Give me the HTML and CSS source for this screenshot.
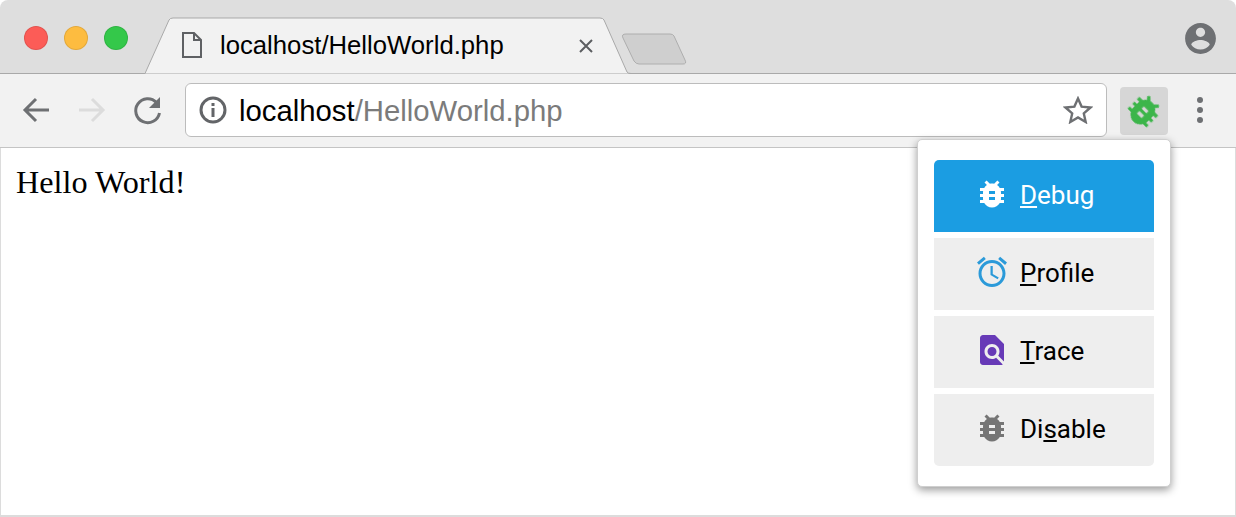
FILE: index.html
```html
<!DOCTYPE html>
<html lang="en">
<head>
<meta charset="utf-8">
<title>localhost/HelloWorld.php</title>
<link rel="stylesheet" href="styles.css">
</head>
<body>
<div class="window">
  <header class="titlebar">
    <div class="lights">
      <span class="light red"></span>
      <span class="light yellow"></span>
      <span class="light green"></span>
    </div>
    <div class="tab">
      <svg class="tab-shape" width="487" height="58" viewBox="0 0 487 58">
        <path d="M0 56.5 L24 3 Q25 1 28 1 H455 Q458 1 459 3 L482 55 Q483 56.5 486 56.5 H487" fill="#f2f2f2" stroke="#a9a9a9" stroke-width="1"/>
      </svg>
      <svg class="doc-icon" width="22" height="28" viewBox="0 0 22 28">
        <path d="M2 2 H13 L20 9 V26 H2 Z M13 2 V9 H20" fill="none" stroke="#5f6164" stroke-width="2"/>
      </svg>
      <span class="tab-title">localhost/HelloWorld.php</span>
      <svg class="tab-close" width="16" height="16" viewBox="0 0 16 16">
        <path d="M2 2 L14 14 M14 2 L2 14" stroke="#5c5e61" stroke-width="2"/>
      </svg>
    </div>
    <svg class="newtab" width="66" height="32" viewBox="0 0 66 32">
      <path d="M5 1 H49 Q52 1 53 3 L64 27 Q66 31 62 31 H18 Q15 31 13 28 L2 5 Q0 1 5 1 Z" fill="#cfcfcf" stroke="#aeaeae" stroke-width="1"/>
    </svg>
    <svg class="avatar" width="37" height="37" viewBox="0 0 24 24">
      <path fill="#6e7073" d="M12 2C6.48 2 2 6.48 2 12s4.48 10 10 10 10-4.48 10-10S17.52 2 12 2zm0 3c1.66 0 3 1.34 3 3s-1.34 3-3 3-3-1.34-3-3 1.34-3 3-3zm0 14.2c-2.5 0-4.71-1.28-6-3.22.03-1.99 4-3.08 6-3.08 1.99 0 5.97 1.09 6 3.08-1.29 1.94-3.5 3.22-6 3.22z"/>
    </svg>
  </header>

  <nav class="toolbar">
    <svg class="nav-icon" width="32" height="32" viewBox="0 0 32 32">
      <path d="M29 16 H6 M16 5 L5 16 L16 27" fill="none" stroke="#6e7073" stroke-width="3"/>
    </svg>
    <svg class="nav-icon" width="32" height="32" viewBox="0 0 32 32">
      <path d="M3 16 H26 M16 5 L27 16 L16 27" fill="none" stroke="#dcdcdc" stroke-width="3"/>
    </svg>
    <svg class="nav-icon" width="32" height="32" viewBox="0 0 32 32">
      <path d="M24.5 8.5 A12 12 0 1 0 27.5 19" fill="none" stroke="#6e7073" stroke-width="3"/>
      <path d="M28 3 V14 H17 Z" fill="#6e7073"/>
    </svg>
    <div class="omnibox">
      <svg class="info-icon" width="28" height="28" viewBox="0 0 28 28">
        <circle cx="14" cy="14" r="12" fill="none" stroke="#636568" stroke-width="3"/>
        <rect x="12.5" y="12" width="3" height="9" fill="#636568"/>
        <rect x="12.5" y="7" width="3" height="3" fill="#636568"/>
      </svg>
      <span class="url"><span class="url-host">localhost</span>/HelloWorld.php</span>
      <svg class="star" width="30" height="28" viewBox="0 0 30 28">
        <path d="M15 2.5 L18.6 10.6 L27.5 11.5 L20.8 17.4 L22.7 26 L15 21.5 L7.3 26 L9.2 17.4 L2.5 11.5 L11.4 10.6 Z" fill="none" stroke="#6e7073" stroke-width="2.4"/>
      </svg>
    </div>
    <div class="ext-button">
      <svg class="ext-bug" width="40" height="40" viewBox="0 0 24 24">
        <path fill="#3cb54a" d="M20 8h-2.81c-.45-.78-1.07-1.45-1.82-1.96L17 4.41 15.59 3l-2.17 2.17C12.96 5.06 12.49 5 12 5c-.49 0-.96.06-1.41.17L8.41 3 7 4.41l1.62 1.63C7.88 6.55 7.26 7.22 6.81 8H4v2h2.09c-.05.33-.09.66-.09 1v1H4v2h2v1c0 .34.04.67.09 1H4v2h2.81c1.04 1.79 2.97 3 5.19 3s4.15-1.21 5.19-3H20v-2h-2.09c.05-.33.09-.66.09-1v-1h2v-2h-2v-1c0-.34-.04-.67-.09-1H20V8zm-6 8h-4v-2h4v2zm0-4h-4v-2h4v2z"/>
      </svg>
    </div>
    <div class="menu-dots"><span></span><span></span><span></span></div>
  </nav>

  <main class="content">Hello World!</main>

  <div class="popup">
    <a class="action active">
      <svg class="action-icon" width="36" height="36" viewBox="0 0 24 24">
        <path fill="#fff" d="M20 8h-2.81c-.45-.78-1.07-1.45-1.82-1.96L17 4.41 15.59 3l-2.17 2.17C12.96 5.06 12.49 5 12 5c-.49 0-.96.06-1.41.17L8.41 3 7 4.41l1.62 1.63C7.88 6.55 7.26 7.22 6.81 8H4v2h2.09c-.05.33-.09.66-.09 1v1H4v2h2v1c0 .34.04.67.09 1H4v2h2.81c1.04 1.79 2.97 3 5.19 3s4.15-1.21 5.19-3H20v-2h-2.09c.05-.33.09-.66.09-1v-1h2v-2h-2v-1c0-.34-.04-.67-.09-1H20V8zm-6 8h-4v-2h4v2zm0-4h-4v-2h4v2z"/>
      </svg>
      <span class="action-label"><u>D</u>ebug</span>
    </a>
    <a class="action">
      <svg class="action-icon" width="36" height="36" viewBox="0 0 24 24">
        <path fill="#2b9ad9" d="M22 5.72l-4.6-3.86-1.29 1.53 4.6 3.86L22 5.72zM7.88 3.39L6.6 1.86 2 5.71l1.29 1.53 4.59-3.85zM12.5 8H11v6l4.75 2.85.75-1.23-4-2.37V8zM12 4c-4.97 0-9 4.03-9 9s4.02 9 9 9c4.97 0 9-4.03 9-9s-4.03-9-9-9zm0 16c-3.87 0-7-3.13-7-7s3.13-7 7-7 7 3.13 7 7-3.13 7-7 7z"/>
      </svg>
      <span class="action-label"><u>P</u>rofile</span>
    </a>
    <a class="action">
      <svg class="action-icon" width="36" height="36" viewBox="0 0 24 24">
        <path fill="#673ab7" d="M20 19.59V8l-6-6H6c-1.1 0-1.99.9-1.99 2L4 20c0 1.1.89 2 1.99 2H18c.45 0 .85-.15 1.19-.4l-4.43-4.43c-.8.52-1.74.83-2.76.83-2.76 0-5-2.24-5-5s2.24-5 5-5 5 2.24 5 5c0 1.02-.31 1.96-.83 2.75L20 19.59zM9 13c0 1.66 1.34 3 3 3s3-1.34 3-3-1.34-3-3-3-3 1.34-3 3z"/>
      </svg>
      <span class="action-label"><u>T</u>race</span>
    </a>
    <a class="action">
      <svg class="action-icon" width="36" height="36" viewBox="0 0 24 24">
        <path fill="#757575" d="M20 8h-2.81c-.45-.78-1.07-1.45-1.82-1.96L17 4.41 15.59 3l-2.17 2.17C12.96 5.06 12.49 5 12 5c-.49 0-.96.06-1.41.17L8.41 3 7 4.41l1.62 1.63C7.88 6.55 7.26 7.22 6.81 8H4v2h2.09c-.05.33-.09.66-.09 1v1H4v2h2v1c0 .34.04.67.09 1H4v2h2.81c1.04 1.79 2.97 3 5.19 3s4.15-1.21 5.19-3H20v-2h-2.09c.05-.33.09-.66.09-1v-1h2v-2h-2v-1c0-.34-.04-.67-.09-1H20V8zm-6 8h-4v-2h4v2zm0-4h-4v-2h4v2z"/>
      </svg>
      <span class="action-label">Di<u>s</u>able</span>
    </a>
  </div>
</div>
</body>
</html>
```

FILE: styles.css
```css
* { box-sizing: border-box; }

html, body {
  margin: 0;
  height: 517px;
  overflow: hidden;
  background: #fff;
}

.window {
  position: relative;
  display: flex;
  flex-direction: column;
  width: 1236px;
  height: 517px;
  border-radius: 8px 8px 0 0;
  overflow: hidden;
  font-family: Roboto, "Liberation Sans", sans-serif;
}

.titlebar {
  display: flex;
  align-items: flex-start;
  flex: none;
  height: 74px;
  padding-left: 24px;
  background: #dedede;
  border-bottom: 1px solid #a9a9a9;
}

.lights {
  display: flex;
  gap: 16px;
  margin-top: 26px;
}

.light {
  width: 24px;
  height: 24px;
  border-radius: 50%;
  border: 1px solid rgba(0, 0, 0, 0.1);
}
.red { background: #fc5c57; }
.yellow { background: #fdbc40; }
.green { background: #34c84a; }

.tab {
  position: relative;
  display: flex;
  align-items: center;
  flex: none;
  width: 485px;
  height: 57px;
  margin: 17px 0 0 17px;
  padding-left: 36px;
}

.tab-shape {
  position: absolute;
  left: 0;
  top: 0;
}

.doc-icon, .tab-title, .tab-close { position: relative; }

.doc-icon { margin-top: -1px; }

.tab-title {
  margin-left: 17px;
  font-family: "Liberation Sans", sans-serif;
  font-size: 25.7px;
  color: #000;
}

.tab-close { margin-left: 74px; }

.newtab {
  flex: none;
  margin: 33px 0 0 -9px;
}

.avatar {
  margin: 20px 17px 0 auto;
}

.toolbar {
  display: flex;
  align-items: center;
  flex: none;
  height: 74px;
  padding-left: 20px;
  background: #f2f2f2;
  border-bottom: 1px solid #c4c4c4;
}

.nav-icon {
  flex: none;
  margin-right: 24px;
  margin-top: -1px;
}

.nav-icon:nth-child(3) { margin-right: 21px; }

.omnibox {
  display: flex;
  align-items: center;
  flex: none;
  width: 922px;
  height: 54px;
  margin-top: -1px;
  padding: 0 13px;
  background: #fff;
  border: 1px solid #bcbcbc;
  border-radius: 6px;
}

.url {
  margin: 1px 0 0 12px;
  font-family: "Liberation Sans", sans-serif;
  font-size: 29.3px;
  color: #7b7b7b;
}
.url-host { color: #000; }

.star { margin-left: auto; }

.ext-button {
  display: flex;
  align-items: center;
  justify-content: center;
  flex: none;
  width: 48px;
  height: 48px;
  margin: 0 0 0 13px;
  background: #d6d6d6;
  border-radius: 4px;
}

.ext-bug {
  transform: rotate(45deg);
  filter: blur(0.6px);
}

.menu-dots {
  display: flex;
  flex-direction: column;
  gap: 4px;
  margin-left: 29px;
  margin-top: -1px;
}
.menu-dots span {
  width: 6px;
  height: 6px;
  border-radius: 50%;
  background: #6e7073;
}

.content {
  flex: 1;
  padding: 16px 15px;
  background: #fff;
  border-left: 1px solid #dcdcdc;
  border-right: 1px solid #dcdcdc;
  border-bottom: 2px solid #dcdcdc;
  font-family: "Liberation Serif", serif;
  font-size: 32.2px;
  line-height: 36px;
  color: #000;
}

.popup {
  position: absolute;
  left: 917px;
  top: 139px;
  display: flex;
  flex-direction: column;
  gap: 6px;
  width: 254px;
  height: 348px;
  padding: 20px 16px;
  background: #fff;
  border: 1px solid #cfcfcf;
  border-radius: 5px;
  box-shadow: 0 3px 9px rgba(0, 0, 0, 0.4);
}

.action {
  display: flex;
  align-items: center;
  gap: 10px;
  height: 72px;
  padding-left: 40px;
  background: #eee;
  color: #000;
  font-size: 26px;
}
.action:first-child { border-radius: 5px 5px 0 0; }
.action:last-child { border-radius: 0 0 5px 5px; }

.action.active {
  background: #1b9de2;
  color: #fff;
}

.action-icon {
  flex: none;
  margin-bottom: 5px;
}

.action-label { margin-bottom: 2px; }
```
